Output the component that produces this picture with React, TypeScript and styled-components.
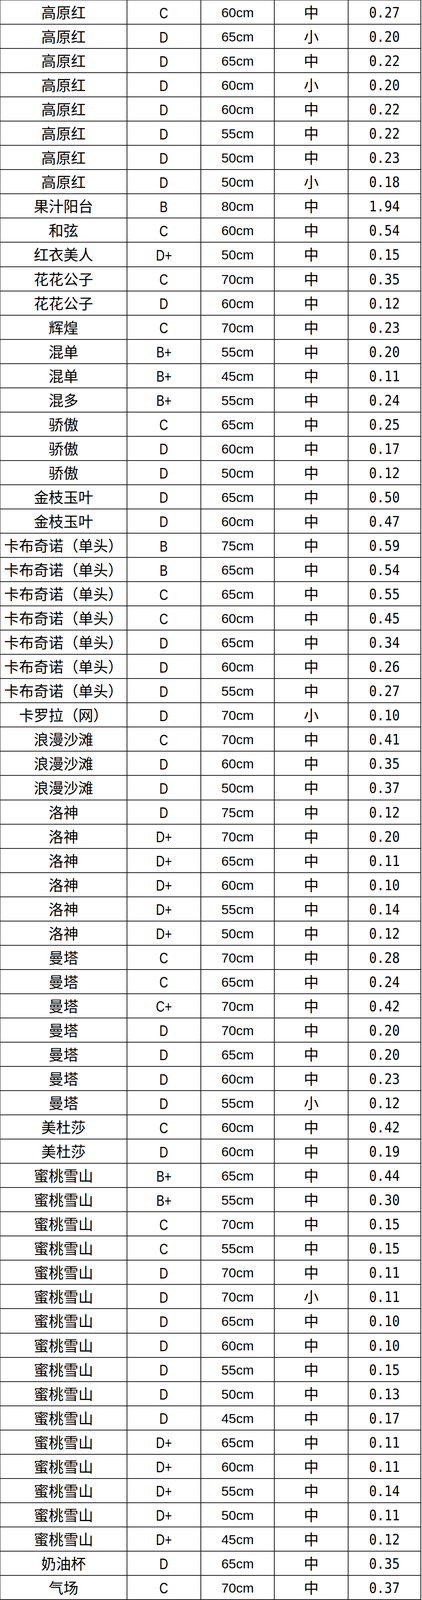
import styled, { createGlobalStyle } from "styled-components";

type Row = [string, string, string, string, string];

const rows: Row[] = [
  ["高原红", "C", "60cm", "中", "0.27"],
  ["高原红", "D", "65cm", "小", "0.20"],
  ["高原红", "D", "65cm", "中", "0.22"],
  ["高原红", "D", "60cm", "小", "0.20"],
  ["高原红", "D", "60cm", "中", "0.22"],
  ["高原红", "D", "55cm", "中", "0.22"],
  ["高原红", "D", "50cm", "中", "0.23"],
  ["高原红", "D", "50cm", "小", "0.18"],
  ["果汁阳台", "B", "80cm", "中", "1.94"],
  ["和弦", "C", "60cm", "中", "0.54"],
  ["红衣美人", "D+", "50cm", "中", "0.15"],
  ["花花公子", "C", "70cm", "中", "0.35"],
  ["花花公子", "D", "60cm", "中", "0.12"],
  ["辉煌", "C", "70cm", "中", "0.23"],
  ["混单", "B+", "55cm", "中", "0.20"],
  ["混单", "B+", "45cm", "中", "0.11"],
  ["混多", "B+", "55cm", "中", "0.24"],
  ["骄傲", "C", "65cm", "中", "0.25"],
  ["骄傲", "D", "60cm", "中", "0.17"],
  ["骄傲", "D", "50cm", "中", "0.12"],
  ["金枝玉叶", "D", "65cm", "中", "0.50"],
  ["金枝玉叶", "D", "60cm", "中", "0.47"],
  ["卡布奇诺（单头）", "B", "75cm", "中", "0.59"],
  ["卡布奇诺（单头）", "B", "65cm", "中", "0.54"],
  ["卡布奇诺（单头）", "C", "65cm", "中", "0.55"],
  ["卡布奇诺（单头）", "C", "60cm", "中", "0.45"],
  ["卡布奇诺（单头）", "D", "65cm", "中", "0.34"],
  ["卡布奇诺（单头）", "D", "60cm", "中", "0.26"],
  ["卡布奇诺（单头）", "D", "55cm", "中", "0.27"],
  ["卡罗拉（网）", "D", "70cm", "小", "0.10"],
  ["浪漫沙滩", "C", "70cm", "中", "0.41"],
  ["浪漫沙滩", "D", "60cm", "中", "0.35"],
  ["浪漫沙滩", "D", "50cm", "中", "0.37"],
  ["洛神", "D", "75cm", "中", "0.12"],
  ["洛神", "D+", "70cm", "中", "0.20"],
  ["洛神", "D+", "65cm", "中", "0.11"],
  ["洛神", "D+", "60cm", "中", "0.10"],
  ["洛神", "D+", "55cm", "中", "0.14"],
  ["洛神", "D+", "50cm", "中", "0.12"],
  ["曼塔", "C", "70cm", "中", "0.28"],
  ["曼塔", "C", "65cm", "中", "0.24"],
  ["曼塔", "C+", "70cm", "中", "0.42"],
  ["曼塔", "D", "70cm", "中", "0.20"],
  ["曼塔", "D", "65cm", "中", "0.20"],
  ["曼塔", "D", "60cm", "中", "0.23"],
  ["曼塔", "D", "55cm", "小", "0.12"],
  ["美杜莎", "C", "60cm", "中", "0.42"],
  ["美杜莎", "D", "60cm", "中", "0.19"],
  ["蜜桃雪山", "B+", "65cm", "中", "0.44"],
  ["蜜桃雪山", "B+", "55cm", "中", "0.30"],
  ["蜜桃雪山", "C", "70cm", "中", "0.15"],
  ["蜜桃雪山", "C", "55cm", "中", "0.15"],
  ["蜜桃雪山", "D", "70cm", "中", "0.11"],
  ["蜜桃雪山", "D", "70cm", "小", "0.11"],
  ["蜜桃雪山", "D", "65cm", "中", "0.10"],
  ["蜜桃雪山", "D", "60cm", "中", "0.10"],
  ["蜜桃雪山", "D", "55cm", "中", "0.15"],
  ["蜜桃雪山", "D", "50cm", "中", "0.13"],
  ["蜜桃雪山", "D", "45cm", "中", "0.17"],
  ["蜜桃雪山", "D+", "65cm", "中", "0.11"],
  ["蜜桃雪山", "D+", "60cm", "中", "0.11"],
  ["蜜桃雪山", "D+", "55cm", "中", "0.14"],
  ["蜜桃雪山", "D+", "50cm", "中", "0.11"],
  ["蜜桃雪山", "D+", "45cm", "中", "0.12"],
  ["奶油杯", "D", "65cm", "中", "0.35"],
  ["气场", "C", "70cm", "中", "0.37"],
];

const App = () => {
  return (
    <>
      <GlobalStyle />
      <Table>
        {rows.map((r, i) => (
          <Line key={i}>
            <Cell>
              <Name>{r[0]}</Name>
            </Cell>
            <Cell>
              <Grade>{r[1]}</Grade>
            </Cell>
            <Cell>
              <Size>{r[2]}</Size>
            </Cell>
            <Cell>
              <Name>{r[3]}</Name>
            </Cell>
            <Cell>
              <Price>{r[4]}</Price>
            </Cell>
          </Line>
        ))}
      </Table>
    </>
  );
};
export default App;

const GlobalStyle = createGlobalStyle`
  html, body {
    margin: 0;
    padding: 0;
    background: #fff;
    overflow: hidden;
  }
  body {
    font-family: "Noto Sans CJK SC", "Liberation Sans", sans-serif;
    color: #000;
  }
`;

// the window may be shorter than the shot's 5890px, so the rows share the viewport height
const Table = styled.div`
  width: 1078px;
  height: 100vh;
  box-sizing: border-box;
  border-top: 1px solid #1a1a1a;
  border-left: 1px solid #1a1a1a;
  display: grid;
  grid-template-rows: repeat(66, minmax(0, 1fr));
`;

const Line = styled.div`
  display: grid;
  grid-template-columns: 325px 189px 188px 189px 186px;
  min-height: 0;
`;

const Cell = styled.div`
  box-sizing: border-box;
  border-right: 2px solid #1a1a1a;
  border-bottom: 2px solid #1a1a1a;
  display: flex;
  align-items: center;
  justify-content: center;
  overflow: hidden;
  white-space: nowrap;
`;

const Name = styled.span`
  font-family: "Noto Sans CJK SC", sans-serif;
  font-size: 38px;
  line-height: 1;
  margin-top: -2px;
`;

const Grade = styled.span`
  display: inline-block;
  font-family: "Liberation Sans", "Noto Sans CJK SC", sans-serif;
  font-size: 39px;
  line-height: 1;
  transform: scaleX(0.8);
  margin-top: 4px;
`;

const Size = styled.span`
  font-family: "Liberation Sans", sans-serif;
  font-size: 34px;
  line-height: 1;
  margin-top: 2px;
`;

const Price = styled.span`
  display: inline-block;
  font-family: "DejaVu Sans Mono", "Liberation Mono", monospace;
  font-size: 38px;
  line-height: 1;
  transform: scaleX(0.86);
  margin-top: 2px;
`;
